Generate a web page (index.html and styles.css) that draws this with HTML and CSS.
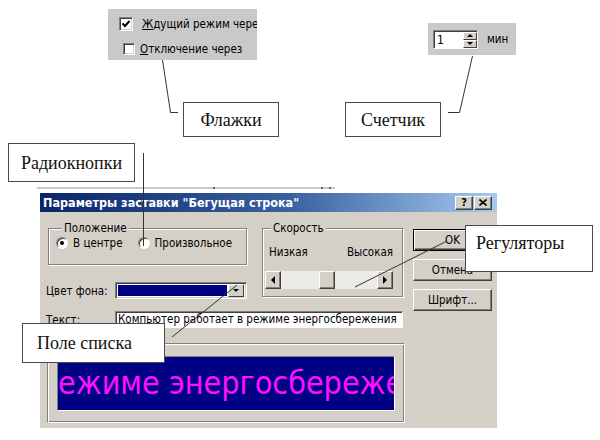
FILE: index.html
```html
<!DOCTYPE html>
<html lang="ru">
<head>
<meta charset="utf-8">
<title>Элементы управления диалогового окна</title>
<link rel="stylesheet" href="styles.css">
</head>
<body>
<div class="canvas">

  <!-- fragment: check boxes -->
  <div class="snip snip-checks">
    <div class="chk-row row1">
      <span class="chk chk-big">
        <svg width="10" height="10" viewBox="0 0 10 10"><polyline points="1.5,4.5 4,7 8.5,2" fill="none" stroke="#000" stroke-width="2"/></svg>
      </span>
      <span><u>Ж</u>дущий режим через</span>
    </div>
    <div class="chk-row row2">
      <span class="chk"></span>
      <span><u>О</u>тключение через</span>
    </div>
  </div>

  <!-- fragment: spin counter -->
  <div class="snip snip-counter">
    <div class="spin-field">
      <span class="spin-val">1</span>
      <span class="spin-btns">
        <span class="spin-btn"><i class="tri tri-up"></i></span>
        <span class="spin-btn"><i class="tri tri-down"></i></span>
      </span>
    </div>
    <span class="spin-unit">мин</span>
  </div>

  <!-- edge of the window behind the dialog -->
  <div class="backdrop-edge"><i></i><i></i><i></i></div>

  <!-- screensaver settings dialog -->
  <div class="dialog">
    <div class="titlebar">
      <span class="title">Параметры заставки "Бегущая строка"</span>
      <span class="tb-btns">
        <span class="tb-btn tb-help">?</span>
        <span class="tb-btn">
          <svg width="8" height="7" viewBox="0 0 8 7"><path d="M0.5 0.5 L7.5 6.5 M7.5 0.5 L0.5 6.5" stroke="#000" stroke-width="1.6"/></svg>
        </span>
      </span>
    </div>

    <div class="body">
      <div class="group pos">
        <span class="legend">Положение</span>
        <div class="radio-row">
          <span class="radio-item"><span class="radio on"></span>В центре</span>
          <span class="radio-item"><span class="radio"></span>Произвольное</span>
        </div>
      </div>

      <div class="field-row color-row">
        <span class="lbl">Цвет фона:</span>
        <div class="combo">
          <span class="combo-value"></span>
          <span class="combo-btn"><i class="tri tri-down"></i></span>
        </div>
      </div>

      <div class="group speed">
        <span class="legend">Скорость</span>
        <div class="speed-labels"><span>Низкая</span><span>Высокая</span></div>
        <div class="scrollbar">
          <span class="sb-btn"><i class="tri tri-left"></i></span>
          <span class="sb-track"><span class="sb-thumb" style="margin-left:38px"></span></span>
          <span class="sb-btn"><i class="tri tri-right"></i></span>
        </div>
      </div>

      <div class="buttons">
        <span class="btn btn-default">OK</span>
        <span class="btn">Отмена</span>
        <span class="btn">Шрифт...</span>
      </div>

      <div class="field-row text-row">
        <span class="lbl">Текст:</span>
        <div class="textbox">Компьютер работает в режиме энергосбережения</div>
      </div>

      <div class="preview">
        <div class="preview-screen"><span class="marquee">ежиме энергосбережения</span></div>
      </div>
    </div>
  </div>

  <!-- leader lines of the callouts -->
  <svg class="leaders" width="600" height="440" viewBox="0 0 600 440">
    <g fill="none" stroke="#333" stroke-width="1">
      <polyline points="162.5,60 170.5,112.5 178,112.5"/>
      <polyline points="472.5,56 459.5,112.5 448,112.5"/>
      <line x1="143.5" y1="153" x2="143.5" y2="246"/>
      <line x1="447" y1="241" x2="355" y2="287"/>
      <line x1="172" y1="337" x2="237" y2="285"/>
    </g>
  </svg>

  <div class="callout c-flags">Флажки</div>
  <div class="callout c-counter">Счетчик</div>
  <div class="callout c-radio">Радиокнопки</div>
  <div class="callout c-sliders">Регуляторы</div>
  <div class="callout c-list">Поле списка</div>
</div>
</body>
</html>
```

FILE: styles.css
```css
* { box-sizing: border-box; }

html, body {
  margin: 0;
  padding: 0;
  background: #fff;
}

.canvas {
  position: relative;
  width: 600px;
  height: 440px;
  overflow: hidden;
  font-family: "DejaVu Sans Condensed", "DejaVu Sans", sans-serif;
  font-stretch: condensed;
  font-size: 11.5px;
  color: #000;
}

/* ---------- shared 3D bits ---------- */
.tri {
  display: block;
  width: 0;
  height: 0;
  border-style: solid;
  border-color: transparent;
}
.tri-up    { border-width: 0 3px 3px 3px; border-bottom-color: #000; }
.tri-down  { border-width: 3px 3px 0 3px; border-top-color: #000; }
.tri-left  { border-width: 4px 4px 4px 0; border-right-color: #000; }
.tri-right { border-width: 4px 0 4px 4px; border-left-color: #000; }

/* ---------- fragments on top ---------- */
.snip {
  position: absolute;
  background: #c9c9c9;
  white-space: nowrap;
}

.snip-checks {
  left: 108px;
  top: 9px;
  width: 149px;
  height: 51px;
  overflow: hidden;
  display: flex;
  flex-direction: column;
}

.chk-row {
  display: flex;
  align-items: center;
  height: 14px;
}
.row1 { margin: 8px 0 0 11px; gap: 9px; }
.row2 { margin: 11px 0 0 15px; gap: 5px; }

.chk {
  width: 12px;
  height: 12px;
  flex: none;
  background: #fff;
  border: 1px solid;
  border-color: #808080 #fff #fff #808080;
  box-shadow: inset 1px 1px 0 #404040, inset -1px -1px 0 #d4d0c8;
  display: flex;
  align-items: center;
  justify-content: center;
}
.chk-big {
  width: 14px;
  height: 14px;
}

.snip-counter {
  left: 428px;
  top: 23px;
  width: 88px;
  height: 32px;
  display: flex;
  align-items: center;
  padding-left: 5px;
  gap: 9px;
}

.spin-field {
  width: 45px;
  height: 19px;
  background: #fff;
  border: 1px solid;
  border-color: #808080 #fff #fff #808080;
  box-shadow: inset 1px 1px 0 #404040;
  display: flex;
  justify-content: space-between;
  padding: 1px 0 0 2px;
}
.spin-val {
  font-size: 12px;
  line-height: 16px;
  padding-left: 1px;
}
.spin-btns {
  display: flex;
  flex-direction: column;
  width: 14px;
}
.spin-btn {
  flex: 1;
  background: #d4d0c8;
  border: 1px solid;
  border-color: #fff #404040 #404040 #fff;
  display: flex;
  align-items: center;
  justify-content: center;
}

/* ---------- window behind ---------- */
.backdrop-edge {
  position: absolute;
  left: 37px;
  top: 187px;
  width: 298px;
  height: 2px;
  background: #c8c8c8;
}
.backdrop-edge i {
  position: absolute;
  top: 0;
  width: 2px;
  height: 2px;
  background: #666;
}
.backdrop-edge i:nth-child(1) { left: 176px; }
.backdrop-edge i:nth-child(2) { left: 284px; }
.backdrop-edge i:nth-child(3) { left: 292px; }

/* ---------- dialog ---------- */
.dialog {
  position: absolute;
  left: 40px;
  top: 193px;
  width: 457px;
  height: 235px;
  background: #d4d0c8;
  display: flex;
  flex-direction: column;
}

.titlebar {
  height: 19px;
  flex: none;
  background: linear-gradient(90deg, #0a246a 0%, #3a62a0 55%, #a6caf0 100%);
  display: flex;
  align-items: center;
  justify-content: space-between;
  padding: 0 5px 0 3px;
}
.title {
  color: #fff;
  font-weight: bold;
  font-size: 12.5px;
  white-space: nowrap;
}
.tb-btns {
  display: flex;
  gap: 1px;
}
.tb-btn {
  width: 18px;
  height: 14px;
  background: #d4d0c8;
  border: 1px solid;
  border-color: #fff #404040 #404040 #fff;
  box-shadow: inset -1px -1px 0 #808080;
  display: flex;
  align-items: center;
  justify-content: center;
  font-weight: bold;
  font-size: 11px;
  line-height: 1;
}

.body {
  flex: 1;
  display: grid;
  grid-template-columns: 201px 156px 89px;
  align-items: start;
  padding: 10px 5px 6px 6px;
}

/* etched group boxes */
.group {
  border: 1px solid #808080;
  box-shadow: inset 1px 1px 0 #fff, 1px 1px 0 #fff;
  margin-top: 6px;
}
.legend {
  display: block;
  width: fit-content;
  margin: -7px 0 0 6px;
  padding: 0 2px;
  background: #d4d0c8;
  line-height: 13px;
  white-space: nowrap;
}

.pos {
  grid-column: 1;
  grid-row: 1;
  margin-left: 2px;
  width: 199px;
  padding: 0 0 14px 7px;
}
.radio-row {
  margin-top: 1px;
  display: flex;
  gap: 15px;
  line-height: 14px;
  white-space: nowrap;
}
.radio-item {
  display: flex;
  align-items: center;
  gap: 5px;
}
.radio {
  width: 12px;
  height: 12px;
  border-radius: 50%;
  background: #fff;
  border: 1px solid;
  border-color: #808080 #fff #fff #808080;
  box-shadow: inset 1px 1px 0 #404040;
  display: flex;
  align-items: center;
  justify-content: center;
}
.radio.on::after {
  content: "";
  width: 4px;
  height: 4px;
  border-radius: 50%;
  background: #000;
}

.field-row {
  display: flex;
  align-items: center;
  white-space: nowrap;
}
.lbl {
  width: 69px;
  flex: none;
}

.color-row {
  grid-column: 1;
  grid-row: 2;
  margin-top: 17px;
}
.combo {
  width: 132px;
  height: 17px;
  background: #fff;
  border: 1px solid;
  border-color: #808080 #fff #fff #808080;
  box-shadow: inset 1px 1px 0 #404040, inset -1px -1px 0 #d4d0c8;
  display: flex;
  padding: 2px;
  gap: 1px;
}
.combo-value {
  flex: 1;
  background: #000084;
}
.combo-btn {
  width: 16px;
  margin: -1px 0;
  background: #d4d0c8;
  border: 1px solid;
  border-color: #fff #404040 #404040 #fff;
  display: flex;
  align-items: center;
  justify-content: center;
}

.speed {
  grid-column: 2;
  grid-row: 1 / 3;
  margin-left: 15px;
  padding: 0 9px 7px 2px;
}
.speed-labels {
  margin-top: 10px;
  display: flex;
  justify-content: space-between;
  padding: 0 0 0 4px;
  line-height: 14px;
}
.scrollbar {
  margin-top: 12px;
  height: 18px;
  display: flex;
}
.sb-btn {
  width: 16px;
  background: #d4d0c8;
  border: 1px solid;
  border-color: #fff #404040 #404040 #fff;
  box-shadow: inset -1px -1px 0 #808080;
  display: flex;
  align-items: center;
  justify-content: center;
}
.sb-track {
  flex: 1;
  display: flex;
  background: #ecebe7;
}
.sb-thumb {
  width: 16px;
  background: #d4d0c8;
  border: 1px solid;
  border-color: #fff #404040 #404040 #fff;
  box-shadow: inset -1px -1px 0 #808080;
}

.buttons {
  grid-column: 3;
  grid-row: 1 / 4;
  margin: 7px 0 0 10px;
  display: flex;
  flex-direction: column;
  gap: 8px;
}
.btn {
  height: 22px;
  width: 79px;
  background: #d4d0c8;
  border: 1px solid;
  border-color: #fff #404040 #404040 #fff;
  box-shadow: inset -1px -1px 0 #808080;
  display: flex;
  align-items: center;
  justify-content: center;
}
.btn-default {
  border-color: #000;
  box-shadow: inset 1px 1px 0 #fff, inset -1px -1px 0 #404040, inset -2px -2px 0 #808080;
}

.text-row {
  grid-column: 1 / 3;
  grid-row: 3;
  margin-top: 12px;
}
.textbox {
  flex: 1;
  height: 17px;
  background: #fff;
  border: 1px solid;
  border-color: #808080 #fff #fff #808080;
  box-shadow: inset 1px 1px 0 #404040;
  padding: 0 0 0 2px;
  line-height: 15px;
  overflow: hidden;
}

.preview {
  grid-column: 1 / 3;
  grid-row: 4;
  margin: 15px -2px 0 1px;
  height: 80px;
  border: 1px solid;
  border-color: #808080 #fff #fff #808080;
  box-shadow: inset 1px 1px 0 #fff, inset -1px -1px 0 #808080;
  padding: 12px 9px 11px 9px;
}
.preview-screen {
  height: 55px;
  background: #000084;
  border: 1px solid;
  border-color: #808080 #fff #fff #808080;
  overflow: hidden;
  white-space: nowrap;
}
.marquee {
  display: block;
  color: #ff10ff;
  font-size: 32px;
  line-height: 52px;
}

/* ---------- callouts ---------- */
.leaders {
  position: absolute;
  left: 0;
  top: 0;
}

.callout {
  position: absolute;
  background: #fff;
  border: 1px solid #4a4a4a;
  font-family: "Liberation Serif", "Times New Roman", serif;
  font-stretch: normal;
  font-size: 18px;
  line-height: 20px;
  color: #111;
  white-space: nowrap;
  display: flex;
  align-items: center;
  justify-content: center;
}
.c-flags   { left: 183px; top: 102px; width: 96px;  height: 35px; }
.c-counter { left: 345px; top: 102px; width: 96px;  height: 35px; }
.c-radio   { left: 8px;   top: 143px; width: 127px; height: 39px; }
.c-sliders {
  left: 465px; top: 225px; width: 128px; height: 47px;
  align-items: flex-start;
  justify-content: flex-start;
  padding: 7px 0 0 10px;
}
.c-list {
  left: 22px; top: 323px; width: 143px; height: 40px;
  justify-content: flex-start;
  padding: 0 0 0 14px;
}
```
